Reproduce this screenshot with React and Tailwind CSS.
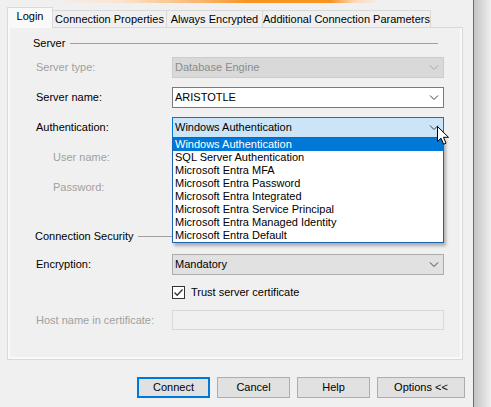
import { useState } from "react";

const AUTH_OPTIONS = [
  "Windows Authentication",
  "SQL Server Authentication",
  "Microsoft Entra MFA",
  "Microsoft Entra Password",
  "Microsoft Entra Integrated",
  "Microsoft Entra Service Principal",
  "Microsoft Entra Managed Identity",
  "Microsoft Entra Default",
];

const TABS = [
  { id: "login", label: "Login", w: "w-[46px]" },
  { id: "props", label: "Connection Properties", w: "w-[114px]" },
  { id: "ae", label: "Always Encrypted", w: "w-[96px]" },
  { id: "extra", label: "Additional Connection Parameters", w: "w-[168px]" },
];

function Chevron({ color = "#606060" }) {
  return (
    <svg width="10" height="6" viewBox="0 0 10 6" className="shrink-0">
      <path d="M1 0.5 L5 4.5 L9 0.5" fill="none" stroke={color} strokeWidth="1" />
    </svg>
  );
}

function Combo({ value, className, textClass = "text-black", chevron, children }) {
  return (
    <div className={`relative w-[272px] h-[21px] border flex items-center pl-[2px] pr-[4px] ${className}`}>
      <span className={`flex-1 truncate ${textClass}`}>{value}</span>
      <Chevron color={chevron} />
      {children}
    </div>
  );
}

function Row({ label, labelClass = "text-black", indent = "pl-[26px]", children, h = "h-[21px]" }) {
  return (
    <div className={`flex items-center ${h}`}>
      <div className={`w-[162px] shrink-0 ${indent} ${labelClass}`}>{label}</div>
      {children}
    </div>
  );
}

function GroupTitle({ title, className = "" }) {
  return (
    <div className={`flex items-center h-[14px] pl-[23px] pr-[22px] ${className}`}>
      <span className="shrink-0">{title}</span>
      <div className="flex-1 h-px bg-[#a0a0a0] ml-[5px]" />
    </div>
  );
}

export default function App() {
  const [tab, setTab] = useState("login");
  const [trust, setTrust] = useState(true);

  return (
    <div className="w-[491px] h-[407px] flex overflow-hidden bg-[#f0f0f0] text-[11px] leading-none text-black font-['Liberation_Sans',Arial,sans-serif] relative">
      <div className="w-[473px] shrink-0 flex flex-col">
        {/* progress strip */}
        <div className="h-[3px] bg-[linear-gradient(90deg,transparent_50px,#fbe4cf_120px,#f9b66e_200px,#f7931e_250px,#f7931e_330px,#fbd9b8_355px,transparent_380px)]" />

        {/* Tabs */}
        <div className="flex items-end h-[24px] pl-[7px] relative z-10">
          {TABS.map((t) => {
            const active = t.id === tab;
            return (
              <button
                key={t.id}
                onClick={() => setTab(t.id)}
                className={`${t.w} shrink-0 flex items-center justify-center border border-[#d9d9d9] ${
                  active
                    ? "h-[21px] bg-[#f9f9f9] border-b-0 -mb-px pb-[3px]"
                    : "h-[18px] bg-[#f0f0f0] border-l-0 -mb-px"
                }`}
              >
                {t.label}
              </button>
            );
          })}
        </div>

        {/* Panel */}
        <div className="ml-[7px] w-[456px] h-[333px] border border-[#d9d9d9] bg-[#f9f9f9] pl-[2px] pr-[2px] pb-[2px]">
          <div className="h-full bg-[#f0f0f0] flex flex-col">
            <GroupTitle title="Server" className="mt-[8px]" />

            <div className="mt-[7px]">
              <Row label="Server type:" labelClass="text-[#a0a0a0]">
                <Combo
                  value="Database Engine"
                  className="bg-[#d9d9d9] border-[#cccccc]"
                  textClass="text-[#8c8c8c]"
                  chevron="#a8a8a8"
                />
              </Row>
            </div>

            <div className="mt-[9px]">
              <Row label="Server name:">
                <Combo value="ARISTOTLE" className="bg-white border-[#7a7a7a]" chevron="#404040" />
              </Row>
            </div>

            <div className="mt-[9px] relative z-20">
              <Row label="Authentication:">
                <Combo
                  value="Windows Authentication"
                  className="bg-[#cce4f7] border-[#0078d7]"
                  chevron="#404040"
                >
                  <div className="absolute left-[-1px] top-[19px] w-[272px] border border-[#1b64b4] bg-white shadow-[2px_3px_3px_rgba(0,0,0,0.28)]">
                    {AUTH_OPTIONS.map((o, i) => (
                      <div
                        key={o}
                        className={`h-[13px] flex items-center pl-[2px] ${
                          i === 0 ? "bg-[#0078d7] text-white" : "text-black"
                        }`}
                      >
                        {o}
                      </div>
                    ))}
                  </div>
                </Combo>
              </Row>
            </div>

            <div className="mt-[9px]">
              <Row label="User name:" labelClass="text-[#a0a0a0]" indent="pl-[43px]" />
            </div>
            <div className="mt-[9px]">
              <Row label="Password:" labelClass="text-[#a0a0a0]" indent="pl-[43px]" />
            </div>

            <GroupTitle title="Connection Security" className="mt-[31px] pl-[25px]" />

            <div className="mt-[11px]">
              <Row label="Encryption:">
                <Combo value="Mandatory" className="bg-[#e1e1e1] border-[#adadad]" chevron="#404040" />
              </Row>
            </div>

            <div className="mt-[11px] flex items-center h-[13px] pl-[162px]">
              <button
                onClick={() => setTrust((v) => !v)}
                className="w-[13px] h-[13px] border border-[#333333] bg-white flex items-center justify-center"
              >
                {trust && (
                  <svg width="11" height="11" viewBox="0 0 11 11">
                    <path d="M1.5 5.5 L4.2 8.3 L9.5 2.5" fill="none" stroke="#333333" strokeWidth="1.3" />
                  </svg>
                )}
              </button>
              <span className="ml-[6px]">Trust server certificate</span>
            </div>

            <div className="mt-[11px]">
              <Row label="Host name in certificate:" labelClass="text-[#a0a0a0]" h="h-[20px]">
                <div className="w-[272px] h-[20px] border border-[#d9d9d9] bg-[#f0f0f0]" />
              </Row>
            </div>
          </div>
        </div>

        {/* Buttons */}
        <div className="flex gap-[7px] ml-[137px] mt-[17px]">
          <button className="w-[73px] h-[21px] border-2 border-[#0078d7] bg-[#e1e1e1]">Connect</button>
          <button className="w-[73px] h-[21px] border border-[#adadad] bg-[#e1e1e1]">Cancel</button>
          <button className="w-[73px] h-[21px] border border-[#adadad] bg-[#e1e1e1]">Help</button>
          <button className="w-[88px] h-[21px] border border-[#adadad] bg-[#e1e1e1]">Options &lt;&lt;</button>
        </div>
      </div>

      {/* window edge */}
      <div className="w-px shrink-0 bg-[#6a6a6a]" />
      <div className="flex-1 bg-gradient-to-r from-[#c4c4c4] to-[#efefef]" />

      {/* mouse pointer */}
      <svg
        width="13"
        height="20"
        viewBox="0 0 13 20"
        className="absolute left-[437px] top-[126px] z-30 pointer-events-none"
      >
        <path
          d="M0.5 0.5 L0.5 15.5 L4 12.2 L6.6 18.2 L9 17.2 L6.5 11.3 L11.5 11.3 Z"
          fill="white"
          stroke="black"
          strokeWidth="1"
          strokeLinejoin="round"
        />
      </svg>
    </div>
  );
}
